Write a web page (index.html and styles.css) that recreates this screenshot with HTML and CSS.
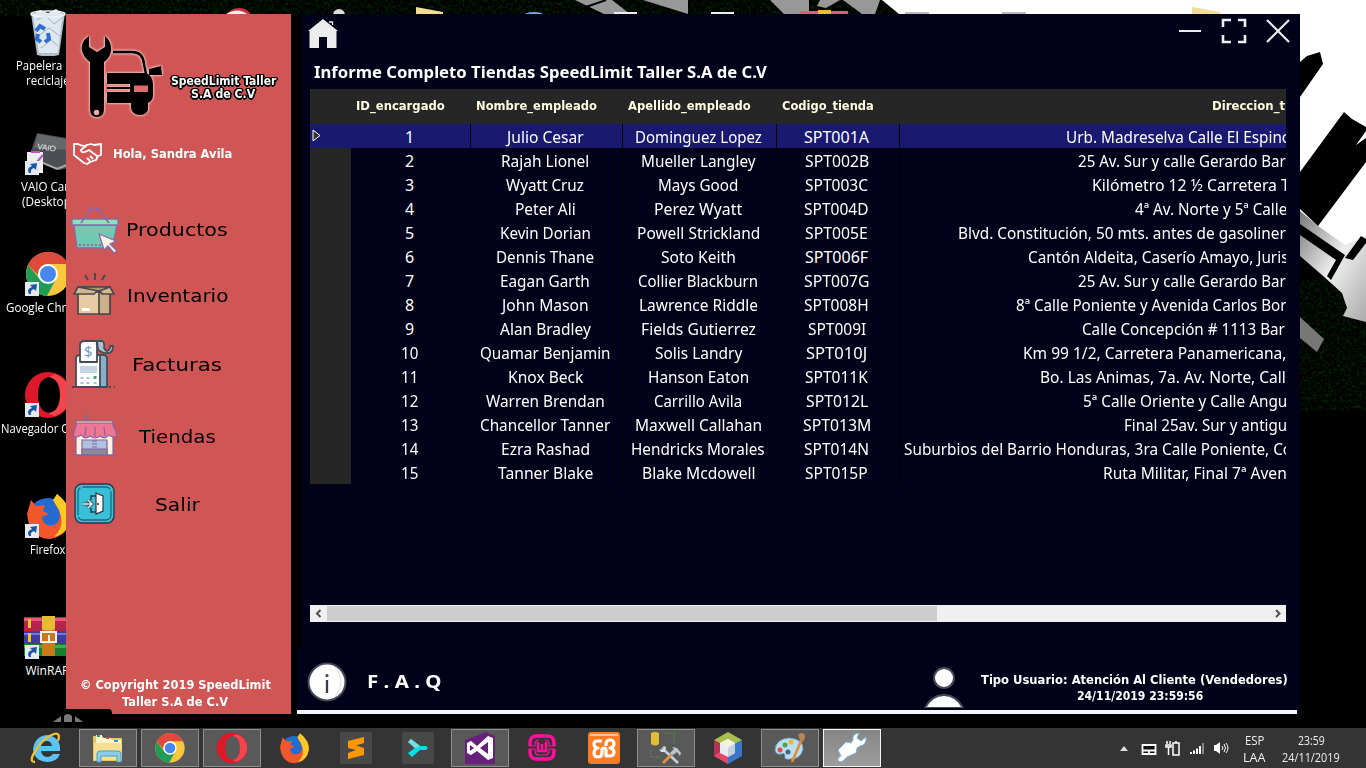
FILE: index.html
```html
<!DOCTYPE html>
<html lang="es">
<head>
<meta charset="utf-8">
<title>SpeedLimit Taller</title>
<link rel="stylesheet" href="styles.css">
</head>
<body>
<svg class="wallpaper" viewBox="0 0 1366 768">
  <defs>
    <linearGradient id="rock" x1="0" y1="0" x2="1" y2="1"><stop offset="0" stop-color="#777"/><stop offset=".5" stop-color="#eee"/><stop offset="1" stop-color="#aaa"/></linearGradient>
    <filter id="grain" x="0" y="0" width="100%" height="100%" color-interpolation-filters="sRGB"><feTurbulence type="fractalNoise" baseFrequency=".35" numOctaves="3" seed="4"/><feColorMatrix values="0 0 0 0 0  0 .4 0 0 -.17  0 0 0 0 0  0 0 0 0 1"/></filter>
  </defs>
  <rect width="1366" height="768" fill="#000"/>
  <rect width="900" height="16" filter="url(#grain)"/>
  <rect x="1300" y="280" width="66" height="130" filter="url(#grain)"/>
  <path d="M575 0H612L630 14H604Z M643 0H688V14L672 9Z M770 0H809V14H784Z M820 0H840L826 8L817 6Z M843 0H880L875 14H862Z" fill="#989898"/>
  <path d="M586 7L606 0" stroke="#000" stroke-width="2"/>
  <path d="M882 0H1366V226H1300V14H899Z" fill="#fff"/>
  <path d="M1300 211L1318 226L1366 215V322L1343 316L1347 308L1342 293L1322 275L1300 256Z" fill="url(#rock)"/>
  <path d="M1318 226L1366 160V236L1345 245Z" fill="#fff"/>
  <path d="M1300 62L1307 56L1320 52L1323 64L1300 97Z M1300 172L1344 112L1352 119L1366 127V131L1356 145L1366 138V162L1318 226L1300 209Z M1300 224L1345 255L1331 280L1327 276L1336 260L1300 235Z M1361 236L1366 239V243L1353 260L1345 258Z" fill="#000"/>
  <path d="M1300 317L1324 339L1317 352L1300 338Z" fill="#777"/>
  <circle cx="239" cy="23" r="15" fill="#d42a3a"/><path d="M226 14Q238 7 247 14" fill="#eee"/>
  <circle cx="339" cy="15" r="6" fill="#ddd"/>
  <path d="M416 7L443 12V14H416Z M1192 7L1220 12V14H1192Z" fill="#f0dc94"/>
  <ellipse cx="534" cy="16" rx="11" ry="4" fill="#7aa4e0"/>
  <path d="M614 12H637V14H614Z M711 12H734V14H711Z" fill="#eee"/>
  <path d="M800 11H848V14H800Z" fill="#e4587b"/><path d="M818 10H831V14H818Z" fill="#e8bc32"/>
  <path d="M905 12H929V14H905Z M1002 12H1026V14H1002Z" fill="#bbb"/>
</svg>

<nav class="desktop">
  <div class="shortcut">
    <svg class="pic" viewBox="0 0 48 48"><path d="M7 5L13 47Q24 50 35 47L41 5Z" fill="#aebfcb"/><path d="M9 6L16 2L24 5L32 1L39 6L37 18L34 45H15Z" fill="#dfe8ee"/><path d="M12 12L22 8L30 16L38 10M14 28L25 20L36 28M17 40L27 32L34 38" stroke="#9fb2c2" fill="none"/><ellipse cx="24" cy="6" rx="17" ry="3" fill="none" stroke="#eef4f7" stroke-width="1.5"/><path d="M12 23L16 18L21 21M24 25L25 31L21 34M17 34L13 31L14 26" stroke="#2c6fd0" stroke-width="4" fill="none"/></svg>
    <p><span class="fit" data-w="63">Papelera de</span></p><p><span class="fit" data-w="44">reciclaje</span></p>
  </div>
  <div class="shortcut">
    <svg class="pic" viewBox="0 0 48 48"><path d="M13 4L48 10V38L36 41L5 28Z" fill="#4b4e52"/><path d="M14 5L48 11V21L10 19Z" fill="#66696c"/><path d="M5 28L33 40L48 34" stroke="#aaa" fill="none" stroke-width="2"/><text x="13" y="20" class="vaio" transform="rotate(8 13 20)">VAIO</text><path d="M3 23H19V44H3Z" fill="#eee"/><path d="M7 23H16M12 34L19 26" stroke="#b555c8" stroke-width="2"/></svg>
    <svg class="link" viewBox="0 0 14 14"><path d="M0 0H14V14H0Z" fill="#e6eaf0"/><path d="M4 12Q1 7 7 5L5 3L12 2L11 9L9 7Q5 8 6 12Z" fill="#1c56a2"/></svg>
    <p><span class="fit" data-w="54">VAIO Care</span></p><p><span class="fit" data-w="52">(Desktop)</span></p>
  </div>
  <div class="shortcut">
    <svg class="pic" viewBox="0 0 48 48"><use href="#chrome"/></svg>
    <svg class="link" viewBox="0 0 14 14"><path d="M0 0H14V14H0Z" fill="#e6eaf0"/><path d="M4 12Q1 7 7 5L5 3L12 2L11 9L9 7Q5 8 6 12Z" fill="#1c56a2"/></svg>
    <p><span class="fit" data-w="84">Google Chrome</span></p>
  </div>
  <div class="shortcut">
    <svg class="pic" viewBox="0 0 48 48"><use href="#opera"/></svg>
    <svg class="link" viewBox="0 0 14 14"><path d="M0 0H14V14H0Z" fill="#e6eaf0"/><path d="M4 12Q1 7 7 5L5 3L12 2L11 9L9 7Q5 8 6 12Z" fill="#1c56a2"/></svg>
    <p><span class="fit" data-w="93">Navegador Opera</span></p>
  </div>
  <div class="shortcut">
    <svg class="pic" viewBox="0 0 48 48"><use href="#firefox"/></svg>
    <svg class="link" viewBox="0 0 14 14"><path d="M0 0H14V14H0Z" fill="#e6eaf0"/><path d="M4 12Q1 7 7 5L5 3L12 2L11 9L9 7Q5 8 6 12Z" fill="#1c56a2"/></svg>
    <p><span class="fit" data-w="35">Firefox</span></p>
  </div>
  <div class="shortcut">
    <svg class="pic" viewBox="0 0 48 48"><path d="M0 4H48V18H0Z" fill="#b32746"/><path d="M0 5H48V8H0Z" fill="#e4587b"/><path d="M0 18H48V31H0Z" fill="#3d3c9e"/><path d="M0 20H48V22H0Z" fill="#7776d6"/><path d="M0 31H48V43H0Z" fill="#1a7c2e"/><path d="M0 32H48V35H0Z" fill="#37b04b"/><path d="M4 6H7V15H4ZM4 20H7V29H4ZM4 32H7V37H4Z" fill="#f4c51e"/><path d="M18 3H31V43H18Z" fill="#c77a1c"/><path d="M18 3H31V16Q25 19 18 16Z" fill="#e8b932"/><path d="M17 19H32V29H17Z" fill="none" stroke="#eee" stroke-width="2"/><path d="M25 22V30" stroke="#eee" stroke-width="2"/></svg>
    <svg class="link" viewBox="0 0 14 14"><path d="M0 0H14V14H0Z" fill="#e6eaf0"/><path d="M4 12Q1 7 7 5L5 3L12 2L11 9L9 7Q5 8 6 12Z" fill="#1c56a2"/></svg>
    <p><span class="fit" data-w="44">WinRAR</span></p>
  </div>
</nav>

<aside class="sidebar">
  <header class="brand">
    <svg class="logo" viewBox="78 32 88 92">
      <path d="M89 36Q80 42 82 51Q84 58 90 62V109Q90 117 97 117Q104 117 104 109V62Q110 58 111 51Q112 42 105 36V47L97 52L89 47Z"/>
      <path d="M107 73H146Q153 76 153 84V95Q153 101 148 103H107V92H130V84H107Z"/>
      <path d="M131 103H148V110Q146 115 140 115Q132 115 131 108Z"/>
      <path d="M149 69L161 66L162 75H149Z"/>
      <path d="M113 52H132Q143 52 144 64L146 74" fill="none" stroke="#000" stroke-width="2.4"/>
      <path d="M107 88H130" stroke="#000" stroke-width="2"/>
      <rect x="134" y="85.500" width="14" height="6.500" fill="#dd6b69"/>
      <circle cx="96.500" cy="112.500" r="2.800" fill="#f0a8a6"/>
    </svg>
    <h1><span class="fit" data-w="105">SpeedLimit Taller</span><span class="fit" data-w="64">S.A de C.V</span></h1>
  </header>
  <div class="hello">
    <svg viewBox="0 0 30 22"><path d="M2 1L6 1Q11 4 15 2L19 1L22 2L29 1V12L26 13L24 17L18 19L15 21L12 20L2 12Z M15 2L9 7Q9 10 13 9L17 7L25 13M21 16L18 13M18 18L15 15" fill="none" stroke="#fff" stroke-width="1.800" stroke-linejoin="round"/></svg>
    <span class="fit" data-w="119">Hola, Sandra Avila</span>
  </div>
  <ul class="menu">
    <li>
      <svg viewBox="0 0 48 48"><g stroke="#8a68a6" stroke-width="1.300"><path d="M3 19H46L41 42H6Z" fill="#71cab0"/><path d="M1 13H47V19H1Z" fill="#8ce3b8"/><path d="M10 17L20 3M38 17L27 3" fill="none" stroke-width="1.600"/><circle cx="20.500" cy="3" r="1.400" fill="#a073a0"/><circle cx="26.500" cy="3" r="1.400" fill="#a073a0"/><path d="M9 38V40M13 38V40M17 38V40M21 38V40M25 38V40M29 38V40" stroke-width="1.800"/><path d="M28 28L45 35L39 38L46 45L43 47L37 40L33 44Z" fill="#fff3e4"/></g></svg>
      <span class="fit" data-w="102">Productos</span>
    </li>
    <li>
      <svg viewBox="0 0 48 48"><g stroke="#464a4f" stroke-width="1.700" stroke-linejoin="round"><path d="M14 4L17 9M24 2V9M34 4L31 9" stroke-width="2"/><path d="M7 21H39V43H7Z" fill="#e6caa3"/><path d="M28 21H39V43H28Z" fill="#cdb08b"/><path d="M7 16L3 23H23L28 18L31 23H43L39 16Z" fill="#d4b58e"/><path d="M7 16H39L28 20Z" fill="#b8976f"/></g><path d="M11 37H19V40H11Z" fill="#fff"/></svg>
      <span class="fit" data-w="101">Inventario</span>
    </li>
    <li>
      <svg viewBox="0 0 48 48"><g stroke="#444c55" stroke-width="1.800" stroke-linejoin="round"><path d="M9 15Q5 15 5 19V47H36V19Q36 15 30 15Z" fill="#fff"/><path d="M29 15Q36 14 36 19V47H29Z" fill="#8badcc"/><path d="M26 1H31Q34 2 33 8Q36 14 39 8V6H42Q42 13 37 13Q31 14 27 9Z" fill="#a9c2da"/><path d="M9 22V5Q9 1 14 1H27Q25 2 26 6V22Z" fill="#fff"/><path d="M1 47H35M38 47H40M43 47H44" fill="none"/></g><path d="M9 26H26V33H9Z" fill="#c4d5e5"/><path d="M11 37V39M17 37V39M11 42V44M17 42V44M24 42V44" stroke="#a8c0d8" stroke-width="3"/><path d="M24 36V39" stroke="#37aa85" stroke-width="3"/><text x="13" y="17" class="dollar">$</text></svg>
      <span class="fit" data-w="90">Facturas</span>
    </li>
    <li>
      <svg viewBox="0 0 48 48"><g stroke="#8065a6" stroke-width="1.200"><path d="M14 1V10M17 4V10" fill="none"/><path d="M5 22H42V43H5Z" fill="#fff1dc"/><path d="M11 28H36V43H11Z" fill="#b0c2de"/><path d="M11 37H36V43H11Z" fill="#8c8c98"/><path d="M21 29H26M21 32H26M21 35H26" stroke-width="1"/><path d="M6 10H41L46 23Q43 27 38 23Q34 28 29 24Q24 28 19 24Q14 28 10 23Q5 27 2 23Z" fill="#ef7694"/><path d="M15 15L14 24M24 15V25M33 15L34 24" fill="none"/><path d="M5 9H42V11H5Z" fill="#ffe4a6"/><path d="M1 43H46" /></g></svg>
      <span class="fit" data-w="77">Tiendas</span>
    </li>
    <li>
      <svg viewBox="0 0 48 48"><rect x="4" y="4" width="39" height="39" rx="7" fill="#39c0d8" stroke="#293847" stroke-width="1.400"/><rect x="7" y="7" width="33" height="33" rx="5" fill="none" stroke="#186c80" stroke-width="1.300" stroke-dasharray="28 2 60 2"/><path d="M25 32H20V28M20 20V16H25" fill="none" stroke="#24414c" stroke-width="1.500"/><path d="M25 13L32 16V31L25 34Z" fill="#fff" stroke="#333" stroke-width="1.200"/><path d="M12 24H20M17 20L21 24L17 28" fill="none" stroke="#24414c" stroke-width="3"/><path d="M12 24H20M17 20L21 24L17 28" fill="none" stroke="#e5efe9" stroke-width="1.500"/><circle cx="27" cy="24" r="1" fill="#333"/></svg>
      <span class="fit" data-w="45">Salir</span>
    </li>
  </ul>
  <footer class="copyright"><span class="fit" data-w="191">© Copyright 2019 SpeedLimit</span><span class="fit" data-w="106">Taller S.A de C.V</span></footer>
</aside>

<main class="panel">
  <section class="upper">
    <div class="topbar">
      <svg class="home" viewBox="0 0 30 30"><path d="M15 0L30 12H28.500V29H19V18H11V29H1.500V12H0Z" fill="#ececec"/><path d="M21 3H24.500V6" fill="none" stroke="#ececec" stroke-width="1.300"/></svg>
      <div class="controls">
        <svg viewBox="0 0 26 26"><path d="M2 13H24" stroke="#eee" stroke-width="2"/></svg>
        <svg viewBox="0 0 26 26"><path d="M2 9V2H10M17 2H24V9M24 17V24H17M10 24H2V17" fill="none" stroke="#eee" stroke-width="2.600"/></svg>
        <svg viewBox="0 0 26 26"><path d="M2 2L24 24M24 2L2 24" stroke="#eee" stroke-width="2.200"/></svg>
      </div>
    </div>
    <h2><span class="fit" data-w="453">Informe Completo Tiendas SpeedLimit Taller S.A de C.V</span></h2>
    <div class="table" id="table"></div>
    <div class="scroll">
      <svg viewBox="0 0 17 17"><path d="M10.500 5L7 8.500L10.500 12" fill="none" stroke="#505050" stroke-width="2"/></svg>
      <div class="track"><div class="thumb"></div></div>
      <svg viewBox="0 0 17 17"><path d="M7 5L10.500 8.500L7 12" fill="none" stroke="#505050" stroke-width="2"/></svg>
    </div>
  </section>
  <footer class="status">
    <svg class="info" viewBox="0 0 40 40"><circle cx="20" cy="20" r="18.500" fill="#fff" stroke="#454854" stroke-width="2"/><path d="M28 5Q40 18 28 35" fill="none" stroke="#ddd"/><circle cx="20" cy="13.500" r="1.500" fill="#383b49"/><path d="M20 18V31" stroke="#383b49" stroke-width="2.300"/></svg>
    <span class="faq fit" data-w="74">F . A . Q</span>
    <svg class="user" viewBox="0 0 40 42"><circle cx="20" cy="12" r="10" fill="#fff" stroke="#454854" stroke-width="2"/><path d="M1 42Q8 29 20 29Q32 29 39 42Z" fill="#fff" stroke="#454854" stroke-width="2"/></svg>
    <p class="session"><span class="fit" data-w="307">Tipo Usuario: Atención Al Cliente (Vendedores)</span><span class="fit" data-w="126">24/11/2019 23:59:56</span></p>
  </footer>
</main>

<div class="dock-tab"><svg viewBox="0 0 30 9"><path d="M0 9L8 3V9Z M11 9V3Q14 -1 19 3V9Z M22 3L30 9H22Z" fill="#777"/></svg></div>

<footer class="taskbar">
  <div class="apps">
    <div class="app"><svg viewBox="0 0 32 32"><path d="M30 19H11Q12 25 18 25Q21 25 23 22H30Q27 30 17 30Q4 29 3 17Q5 4 17 3Q31 5 30 19ZM11 14H22Q21 9 17 9Q12 9 11 14Z" fill="#5dc3f4"/><path d="M5 30Q-2 30 6 18Q14 5 24 2Q31 0 28 9" fill="none" stroke="#f3c12d" stroke-width="2.300"/></svg></div>
    <div class="app open"><svg viewBox="0 0 32 32"><path d="M1 4H10L12 6H30V29H1Z" fill="#e6c85e"/><path d="M4 3H10V6H18L20 8H29V14H4Z" fill="#fff7ce"/><path d="M5 4H8" stroke="#2ca14a" stroke-width="2"/><path d="M14 6H17" stroke="#d84a3a" stroke-width="2"/><path d="M22 9H26" stroke="#3494d8" stroke-width="2"/><path d="M2 11H30V28H2Z" fill="#f6df8e"/><path d="M5 30V22Q5 19 8 19H26Q29 19 29 22V30H25V24H9V30Z" fill="#8ccbe9" stroke="#4e9dc7"/></svg></div>
    <div class="app open"><svg viewBox="0 0 48 48"><g id="chrome"><circle cx="24" cy="24" r="22" fill="#f8c73b"/><path d="M4 15A22 22 0 0 1 44 14H24A10 10 0 0 0 14 25Z" fill="#de4b3d"/><path d="M4 15A22 22 0 0 0 23 46L32 29A10 10 0 0 1 15 28Z" fill="#209c57"/><circle cx="24" cy="24" r="10" fill="#fff"/><circle cx="24" cy="24" r="8" fill="#4787ee"/></g></svg></div>
    <div class="app open"><svg viewBox="0 0 48 48"><g id="opera"><path d="M24 1A23 23 0 1 0 24 47A23 23 0 1 0 24 1ZM25 6Q36 8 36 24Q36 40 25 42Q14 40 14 24Q14 8 25 6Z" fill="#dc1829" fill-rule="evenodd"/><path d="M31 3Q47 10 47 24Q47 38 31 45Q28 45 25 42Q36 40 36 24Q36 8 25 6Z" fill="#f1444c"/></g></svg></div>
    <div class="app"><svg viewBox="0 0 48 48"><g id="firefox"><circle cx="24" cy="26" r="20" fill="#236bd0"/><path d="M3 22L7 8L12 14L21 13L19 19L25 22L18 25Q19 35 29 33Q38 31 35 18L30 10L33 2Q48 14 46 28Q43 45 25 47Q6 46 3 22Z" fill="#f2562b"/><path d="M29 8L33 2Q48 14 46 28Q43 42 30 45Q42 34 35 18Z" fill="#fcca22"/></g></svg></div>
    <div class="app"><svg viewBox="0 0 32 32"><rect width="32" height="32" rx="2" fill="#484848"/><path d="M8 9L24 5V11L16 13.500L24 16V23L8 27V21L16 18L8 16Z" fill="#ff9800"/></svg></div>
    <div class="app"><svg viewBox="0 0 32 32"><rect width="32" height="32" rx="2" fill="#484848"/><path d="M6 10L9 7L18 14H24L26 16L24 18H18L10 25L6 21L13 16Z" fill="#00e1e6"/><path d="M6 10L9 7L18 14L13 16Z" fill="#7bdde1"/></svg></div>
    <div class="app open"><svg viewBox="0 0 32 32"><path d="M1 8L22 0L31 4V32H1Z" fill="#68217a"/><path d="M3 11L7 9L13 14L24 4L29 6V26L24 28L13 19L7 23L3 21ZM6 13V19L10 16ZM16 16L24 22V10Z" fill="#fff" fill-rule="evenodd"/></svg></div>
    <div class="app"><svg viewBox="0 0 32 32"><path d="M4 14V11Q4 4 11 4H21Q28 4 28 11V14M4 17V20Q4 27 11 27H21Q28 27 28 20V17" fill="none" stroke="#ff109c" stroke-width="3.400"/><path d="M3 14H9V11Q10 8 13 8M29 14H23V11Q22 8 19 8M3 17H9V20Q10 23 13 23H19Q22 23 23 20V17H29" fill="none" stroke="#ff109c" stroke-width="1.200"/><path d="M12 10V19H20V10M16 12V19" fill="none" stroke="#ff109c" stroke-width="2.500"/></svg></div>
    <div class="app"><svg viewBox="0 0 32 32"><rect width="32" height="32" rx="3" fill="#fb7a24"/><path d="M2 2H30V4H2Z" fill="#ffc29c"/><path d="M14 9H9Q6 9 6 12Q6 16 10 16Q6 17 6 21Q6 25 10 25Q14 25 14 21V18Q14 16 16 16Q18 16 18 18V24H22Q26 24 26 20Q26 17 22 16Q26 15 26 12Q26 8 22 8Q18 8 18 12V14" fill="none" stroke="#fff" stroke-width="3.200" stroke-linejoin="round"/></svg></div>
    <div class="app open"><svg viewBox="0 0 32 32"><path d="M1 1Q5 -1 9 1V12Q5 15 1 12Z" fill="#e5bd32"/><path d="M14 1H24V12M1 18V25H11" fill="none" stroke="#49a242" stroke-dasharray="1.500 1.500"/><path d="M12 16L28 31" stroke="#c5d1d8" stroke-width="2.600"/><path d="M13 31L22 22" stroke="#d99943" stroke-width="2.600"/><path d="M20 21L24 17L22 15L27 16L31 21L30 24L27 20L23 23Z" fill="#b9c8cf"/><path d="M9 17L11 20L15 20L16 15L13 14L14 17L12 18Z" fill="#d8e1e6"/></svg></div>
    <div class="app"><svg viewBox="0 0 32 32"><path d="M16 0L30 8L16 16L2 8Z" fill="#a9be4c"/><path d="M2 8L16 16V32L2 24Z" fill="#b83255"/><path d="M30 8L16 16V32L30 24Z" fill="#3978c9"/><path d="M2 24L8 20L16 25V32Z" fill="#e4496a"/><path d="M8 11L16 7L23 11V21L16 25L8 21Z" fill="#e9edf0"/><path d="M16 16V25L23 21V11Z" fill="#c4d0dc"/><path d="M8 11L16 7L23 11L16 15Z" fill="#f2f4dd"/></svg></div>
    <div class="app open"><svg viewBox="0 0 32 32"><path d="M1 18Q2 7 15 6Q29 7 29 17Q27 27 16 27Q10 28 11 24Q11 20 7 22Q2 23 1 18Z" fill="#b9dff2" stroke="#71a6c7"/><circle cx="6" cy="18" r="2.500" fill="#dc4e42"/><circle cx="11" cy="13" r="2.500" fill="#50a549"/><circle cx="17" cy="10" r="2.500" fill="#f2b72e"/><circle cx="14" cy="20" r="2.500" fill="#46637a"/><path d="M18 30L27 9" stroke="#e58a34" stroke-width="2.500"/><path d="M24 3Q28 -1 31 3Q32 8 27 11Z" fill="#b98457"/></svg></div>
    <div class="app open active"><svg viewBox="0 0 32 32"><path d="M2 18L10 10L15 11L17 8Q16 2 23 1L21 6L25 9L30 5Q31 13 24 14L21 16L20 21L11 25L7 29Q3 31 2 28Q1 26 5 24Z" fill="#fff" stroke="#78b7e4"/></svg></div>
  </div>
  <div class="tray">
    <svg class="up" viewBox="0 0 8 5"><path d="M0 5L4 0L8 5Z" fill="#ddd"/></svg>
    <svg viewBox="0 0 16 16"><path d="M1.500 5H14.500V14H1.500Z" fill="#111" stroke="#fff" stroke-width="1.800"/><path d="M1 10.500H15M8 10.500V14" stroke="#fff" stroke-width="1.800"/></svg>
    <svg viewBox="0 0 16 16"><path d="M2 1V4M5 1V4M1 5H6V7H1ZM3.500 7V15M8 3H14V15H8ZM10 2H12" fill="none" stroke="#fff" stroke-width="1.500"/></svg>
    <svg viewBox="0 0 16 16"><path d="M2 14V12M5 14V10.500M8 14V8.500M11 14V6" stroke="#fff" stroke-width="2"/><path d="M14 14V3" stroke="#888" stroke-width="2"/></svg>
    <svg viewBox="0 0 16 16"><path d="M1 5H3L7 2V14L3 11H1Z" fill="#fff"/><path d="M9 6Q11 8 9 10M11 4Q14 8 11 12M13 3Q17 8 13 13" fill="none" stroke="#fff"/></svg>
    <p class="lang"><span class="fit" data-w="19">ESP</span><span class="fit" data-w="22">LAA</span></p>
    <p class="clock"><span class="fit" data-w="27">23:59</span><span class="fit" data-w="58">24/11/2019</span></p>
  </div>
</footer>
<script src="app.js"></script>
</body>
</html>
```

FILE: styles.css
```css
* { box-sizing: border-box; }
body, h1, h2, p, ul { margin: 0; padding: 0; }
body { width: 1366px; height: 768px; overflow: hidden; position: relative; background: #000; color: #fff; font-family: "Noto Sans", "Open Sans", sans-serif; font-size: 16px; }
svg { display: block; flex: none; }
.fit { display: inline-block; white-space: nowrap; flex: none; }
.fit > span { display: inline-block; transform-origin: 0 50%; }

.wallpaper { position: absolute; left: 0; top: 0; width: 1366px; height: 768px; }

.desktop { position: absolute; left: 0; top: 8px; width: 96px; display: grid; grid-auto-rows: 121px; font: 12px/15px "Open Sans", sans-serif; }
.shortcut { position: relative; display: flex; flex-direction: column; align-items: center; }
.shortcut .pic { width: 48px; height: 48px; margin-bottom: 2px; }
.shortcut .link { position: absolute; left: 25px; top: 32px; width: 14px; height: 14px; }
.shortcut p { height: 15px; margin-right: 1px; }
.vaio { font: 8px "Liberation Sans", sans-serif; fill: #eee; }

.sidebar { position: absolute; left: 66px; top: 14px; width: 225px; height: 700px; background: #cf5655; display: flex; flex-direction: column; overflow: hidden; }
.brand { display: flex; padding: 18px 0 0 12px; height: 123px; }
.logo { width: 88px; height: 92px; filter: drop-shadow(0 0 1px #f7c6c4) drop-shadow(0 0 1px #f7c6c4); }
.brand h1 { width: 106px; margin: 43px 0 0 4px; display: flex; flex-direction: column; align-items: center; font: bold 12px/13px "DejaVu Sans", sans-serif; text-shadow: -1px -1px #000, 1px -1px #000, -1px 1px #000, 1px 1px #000, 2px 0 #000, -2px 0 #000, 0 2px #000; }
.hello { display: flex; align-items: center; gap: 11px; height: 34px; padding-left: 6px; font: bold 12px/16px "DejaVu Sans", sans-serif; }
.hello svg { width: 30px; height: 22px; }
.menu { list-style: none; margin-top: 25px; display: grid; grid-template-rows: 67px 64px 74px 70px 66px; color: #000; font: 18px/22px "DejaVu Sans", sans-serif; }
.menu li { display: grid; grid-template-columns: 48px 116px; align-items: center; justify-items: center; padding-left: 5px; }
.menu .fit { padding-top: 1px; }
.menu svg { width: 48px; height: 48px; }
.dollar { font: 15px "Open Sans", sans-serif; fill: #6c95c2; }
.copyright { margin-top: auto; display: flex; flex-direction: column; align-items: center; padding: 0 7px 4px 0; font: bold 12.5px/17px "DejaVu Sans", sans-serif; }

.panel { position: absolute; left: 297px; top: 14px; width: 1003px; height: 700px; background: #01011a; }
.upper { height: 634px; border-left: 4px solid #000; padding: 0 14px 0 9px; display: flex; flex-direction: column; }
.topbar { height: 39px; display: flex; justify-content: space-between; padding: 4px 0 0; margin: 0 -5px 0 -2px; }
.home { width: 30px; height: 30px; margin-top: 1px; }
.controls { display: flex; gap: 18px; }
.controls svg { width: 26px; height: 26px; }
.upper h2 { height: 36px; padding-left: 4px; font: bold 15.5px/38px "Noto Sans", sans-serif; }
.table { height: 516px; overflow: hidden; }
.row { display: grid; grid-template-columns: 41px 120px 152px 154px 123px 386px; height: 24px; line-height: 27px; overflow: hidden; }
.row > * { border-right: 1px solid #000; display: flex; justify-content: center; }
.row > :first-child { background: #262626; border: 0; justify-content: flex-start; padding: 5px 0 0 2px; }
.row > :last-child { border: 0; justify-content: flex-start; overflow: hidden; }
.row > :nth-child(2) { padding-right: 2px; }
.row > :nth-child(3), .row > :nth-child(4), .row > :nth-child(5) { padding-right: 3px; }
.row.head { height: 35px; background: #262626; color: #fffbe0; font: bold 12px/34px "DejaVu Sans", sans-serif; }
.row.head > * { border-color: transparent; }
.row.head > :nth-child(2) { padding-right: 20px; }
.row.head > :nth-child(3) { padding-right: 20px; }
.row.head > :nth-child(4) { padding-right: 20px; }
.row.head > :nth-child(5) { padding-right: 20px; }
.row.selected > * { background: #191970; }
.marker { width: 9px; height: 13px; }
.scroll { height: 17px; background: #f0f0f0; display: flex; }
.scroll > svg { width: 17px; height: 17px; }
.track { flex: 1; padding: 1px 0; }
.thumb { width: 610px; height: 15px; background: #cdcdcd; }
.status { height: 66px; display: flex; align-items: center; margin-right: 3px; padding: 0 9px 0 10px; border-bottom: 4px solid #f6f6ff; }
.info { width: 40px; height: 40px; margin-top: 5px; }
.faq { margin: 3px 0 0 20px; font: bold 18px/22px "Noto Sans", sans-serif; }
.user { width: 40px; height: 42px; margin: 16px 16px 0 auto; }
.session { width: 308px; margin-top: 18px; display: flex; flex-direction: column; align-items: center; font: bold 12.5px/16px "DejaVu Sans", sans-serif; }
.session > :last-child { margin-left: 11px; }

.dock-tab { position: absolute; left: 40px; top: 709px; width: 72px; height: 19px; padding: 4px 0 0 13px; background: #000; border-radius: 0 4px 0 0; }
.dock-tab svg { width: 30px; height: 9px; }
.taskbar { position: absolute; left: 0; top: 728px; width: 1366px; height: 40px; background: #343434; display: flex; justify-content: space-between; padding: 0 26px 0 17px; }
.apps { display: flex; gap: 4px; padding-top: 1px; }
.app { width: 58px; height: 38px; display: grid; place-items: center; }
.app svg { width: 32px; height: 32px; }
.app.open { background: #595959; border: 1px solid #8f8f8f; }
.app.active { background: linear-gradient(#858585, #9d9d9d); border-color: #f2f2f2; }
.tray { display: flex; align-items: center; gap: 8px; font: 12px/17px "Open Sans", sans-serif; color: #eee; }
.tray svg { width: 16px; height: 16px; }
.tray .up { width: 8px; height: 5px; margin-right: 5px; }
.lang, .clock { display: flex; flex-direction: column; align-items: center; padding-top: 2px; }
.lang { margin-left: 6px; }
.clock { margin-left: 9px; }
```

FILE: app.js
```js
// [nombre, ancho, apellido, ancho, código, ancho, sangría, dirección, ancho]
const stores = [
  ["Julio Cesar", 77, "Dominguez Lopez", 127, "SPT001A", 65, 166, "Urb. Madreselva Calle El Espino", 225],
  ["Rajah Lionel", 88, "Mueller Langley", 115, "SPT002B", 64, 178, "25 Av. Sur y calle Gerardo Barr", 214],
  ["Wyatt Cruz", 78, "Mays Good", 80, "SPT003C", 63, 192, "Kilómetro 12 ½ Carretera T", 198],
  ["Peter Ali", 61, "Perez Wyatt", 88, "SPT004D", 65, 235, "4ª Av. Norte y 5ª Calle", 152],
  ["Kevin Dorian", 91, "Powell Strickland", 123, "SPT005E", 63, 58, "Blvd. Constitución, 50 mts. antes de gasolinera", 336],
  ["Dennis Thane", 98, "Soto Keith", 75, "SPT006F", 63, 128, "Cantón Aldeita, Caserío Amayo, Juris", 260],
  ["Eagan Garth", 90, "Collier Blackburn", 120, "SPT007G", 65, 178, "25 Av. Sur y calle Gerardo Barr", 214],
  ["John Mason", 87, "Lawrence Riddle", 119, "SPT008H", 65, 116, "8ª Calle Poniente y Avenida Carlos Bor", 271],
  ["Alan Bradley", 91, "Fields Gutierrez", 115, "SPT009I", 58, 182, "Calle Concepción # 1113 Barr", 209],
  ["Quamar Benjamin", 130, "Solis Landry", 87, "SPT010J", 61, 123, "Km 99 1/2, Carretera Panamericana,", 263],
  ["Knox Beck", 75, "Hanson Eaton", 101, "SPT011K", 63, 140, "Bo. Las Animas, 7a. Av. Norte, Call", 246],
  ["Warren Brendan", 119, "Carrillo Avila", 88, "SPT012L", 62, 183, "5ª Calle Oriente y Calle Angu", 204],
  ["Chancellor Tanner", 130, "Maxwell Callahan", 127, "SPT013M", 68, 224, "Final 25av. Sur y antigu", 163],
  ["Ezra Rashad", 89, "Hendricks Morales", 134, "SPT014N", 65, 4, "Suburbios del Barrio Honduras, 3ra Calle Poniente, Co", 388],
  ["Tanner Blake", 95, "Blake Mcdowell", 113, "SPT015P", 63, 203, "Ruta Militar, Final 7ª Aven", 184]
];

const fit = (text, width) => `<span class="fit" data-w="${width}">${text}</span>`;
const marker = '<svg class="marker" viewBox="0 0 9 13"><path d="M1 1V12L8 6.500Z" fill="#333" stroke="#fff"/></svg>';

const head = `<div class="row head"><div></div><div>${fit("ID_encargado", 89)}</div><div>${fit("Nombre_empleado", 121)}</div><div>${fit("Apellido_empleado", 123)}</div><div>${fit("Codigo_tienda", 92)}</div><div style="padding-left:312px">${fit("Direccion_ti", 77)}</div></div>`;

document.getElementById("table").innerHTML = head + stores.map((s, i) =>
  `<div class="row${i ? "" : " selected"}"><div>${i ? "" : marker}</div>` +
  `<div>${fit(i + 1, i > 8 ? 17 : 9)}</div><div>${fit(s[0], s[1])}</div><div>${fit(s[2], s[3])}</div><div>${fit(s[4], s[5])}</div>` +
  `<div style="padding-left:${s[6]}px">${fit(s[7], s[8])}</div></div>`).join("");

// Stretch every label to its nominal width.
document.querySelectorAll(".fit").forEach(el => {
  const inner = document.createElement("span");
  inner.textContent = el.textContent;
  el.replaceChildren(inner);
  const scale = el.dataset.w / inner.offsetWidth;
  el.style.width = el.dataset.w + "px";
  inner.style.transform = `scaleX(${scale})`;
});
```
